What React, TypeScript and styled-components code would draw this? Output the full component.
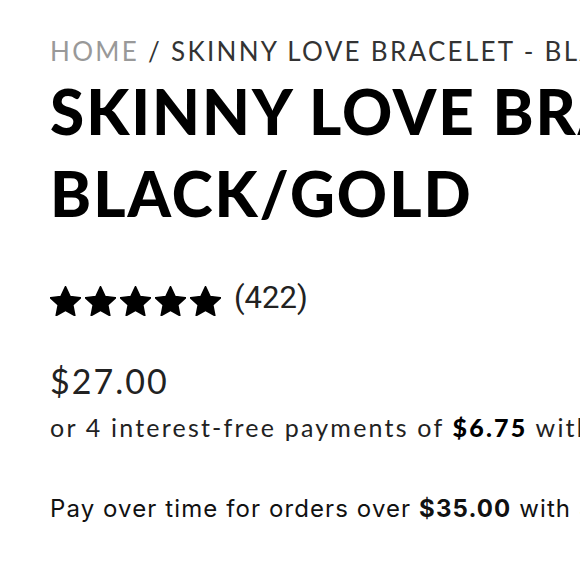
import React from 'react';
import styled, { createGlobalStyle } from 'styled-components';

const GlobalStyle = createGlobalStyle`
 html, body {
  margin: 0;
  padding: 0;
  background: #ffffff;
  overflow: hidden;
 }
`;

function Star() {
 return (
  <StarIcon viewBox="1.4 1.2 21.2 20.4" preserveAspectRatio="none">
   <path d="M12 1.8l3.1 6.6 7.1.8-5.3 4.9 1.4 7.1L12 17.6l-6.3 3.6 1.4-7.1-5.3-4.9 7.1-.8z" strokeLinejoin="round" strokeWidth="1.2" stroke="#000" />
  </StarIcon>
 );
}

function App() {
 return (
  <>
   <GlobalStyle />
   <Page>
    <Breadcrumb>
     <Crumb>HOME</Crumb> / SKINNY LOVE BRACELET - BLACK/GOLD
    </Breadcrumb>
    <Title>SKINNY LOVE BRACELET - BLACK/GOLD</Title>
    <Rating>
     <Stars>
      {[0, 1, 2, 3, 4].map((i) => (
       <Star key={i} />
      ))}
     </Stars>
     <Count>(422)</Count>
    </Rating>
    <Price>$27.00</Price>
    <Installments>
     or 4 interest-free payments of <b>$6.75</b> with Afterpay
    </Installments>
    <PayOver>
     Pay over time for orders over <b>$35.00</b> with Shop Pay
    </PayOver>
   </Page>
  </>
 );
}

export default App;

/* Styled Components */

const Page = styled.div`
 width: 1100px;
 padding: 32px 0 0 50px;
 font-family: Lato, 'Open Sans', sans-serif;
 color: #000;
`;

const Breadcrumb = styled.div`
 font-size: 26px;
 line-height: 38px;
 color: #333;
 letter-spacing: 2.3px;
 white-space: nowrap;
`;

const Crumb = styled.span`
 color: #999;
`;

const Title = styled.h1`
 margin: 0;
 width: 1000px;
 font-size: 62px;
 font-weight: 900;
 line-height: 82px;
 letter-spacing: 2px;
`;

const Rating = styled.div`
 display: flex;
 align-items: center;
 gap: 13px;
 margin-top: 46px;
`;

const Stars = styled.div`
 display: flex;
 gap: 4px;
`;

const StarIcon = styled.svg`
 width: 31px;
 height: 30px;
 fill: #000;
`;

const Count = styled.span`
 font-family: Roboto, sans-serif;
 font-size: 31px;
 line-height: 36px;
 color: #222;
 margin-bottom: 6px;
`;

const Price = styled.div`
 margin-top: 37px;
 font-size: 34px;
 line-height: 44px;
 letter-spacing: 2px;
 color: #222;
`;

const Installments = styled.div`
 margin-top: 6px;
 font-size: 25px;
 line-height: 36px;
 letter-spacing: 2.2px;
 color: #222;
 white-space: nowrap;

 b {
  font-weight: 900;
  color: #000;
 }
`;

const PayOver = styled.div`
 margin-top: 48px;
 font-family: Inter, sans-serif;
 font-size: 24px;
 line-height: 32px;
 letter-spacing: 1.1px;
 color: #111;
 white-space: nowrap;

 b {
  font-weight: 700;
 }
`;
